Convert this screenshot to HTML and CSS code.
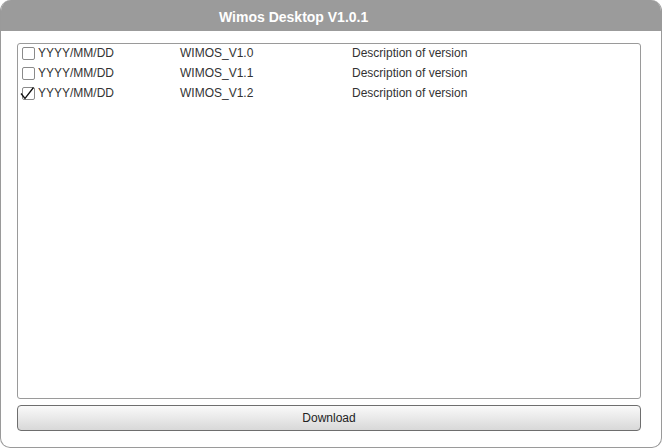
FILE: index.html
```html
<!DOCTYPE html>
<html>
<head>
<meta charset="utf-8">
<link rel="stylesheet" href="styles.css">
</head>
<body>
<div class="window">
  <div class="titlebar"><span class="title">Wimos Desktop V1.0.1</span></div>
  <div class="content">
    <div class="list">
      <div class="row">
        <span class="cell date"><span class="cb"></span>YYYY/MM/DD</span>
        <span class="cell name">WIMOS_V1.0</span>
        <span class="cell desc">Description of version</span>
      </div>
      <div class="row">
        <span class="cell date"><span class="cb"></span>YYYY/MM/DD</span>
        <span class="cell name">WIMOS_V1.1</span>
        <span class="cell desc">Description of version</span>
      </div>
      <div class="row">
        <span class="cell date"><span class="cb checked"><svg width="16" height="15" viewBox="0 0 16 15"><path d="M1 7.5 L5 12.5 L13.5 1.5" fill="none" stroke="#111" stroke-width="1.3"/></svg></span>YYYY/MM/DD</span>
        <span class="cell name">WIMOS_V1.2</span>
        <span class="cell desc">Description of version</span>
      </div>
    </div>
    <button class="download">Download</button>
  </div>
</div>
</body>
</html>
```
FILE: styles.css
```css
* { box-sizing: border-box; }
html, body { margin: 0; padding: 0; background: #fff; }
body { font-family: "Liberation Sans", Arial, sans-serif; }
.window {
  width: 662px;
  height: 448px;
  border: 1px solid #9a9a9a;
  border-top: none;
  border-radius: 11px 11px 10px 10px;
  overflow: hidden;
  display: flex;
  flex-direction: column;
  background: #fff;
}
.titlebar {
  height: 31px;
  background: #9b9b9b;
  display: flex;
  align-items: center;
  padding-left: 219px;
  padding-top: 3px;
  margin: 0 -1px;
}
.title {
  color: #fff;
  font-weight: bold;
  font-size: 14px;
}
.content {
  flex: 1;
  display: flex;
  flex-direction: column;
  padding: 12px 20px 16px 16px;
  gap: 6px;
}
.list {
  height: 356px;
  border: 1px solid #9a9a9a;
  border-radius: 3px;
  display: flex;
  flex-direction: column;
}
.row {
  height: 20px;
  display: flex;
  align-items: center;
  font-size: 12px;
  color: #333;
}
.row:first-child { margin-top: -1px; }
.cell { display: flex; align-items: center; }
.date { width: 162px; padding-left: 4px; }
.name { width: 172px; }
.cb {
  width: 13px;
  height: 13px;
  border: 1px solid #8a8a8a;
  border-radius: 2px;
  margin-right: 3px;
  position: relative;
  background: #fff;
}
.cb svg { position: absolute; left: -3px; top: -2px; }
.download {
  height: 26px;
  border: 1px solid #6e6e6e;
  border-radius: 4px;
  background: linear-gradient(#fafafa, #d8d8d8);
  font-family: "Liberation Sans", Arial, sans-serif;
  font-size: 12px;
  color: #222;
  padding: 0;
}
```
